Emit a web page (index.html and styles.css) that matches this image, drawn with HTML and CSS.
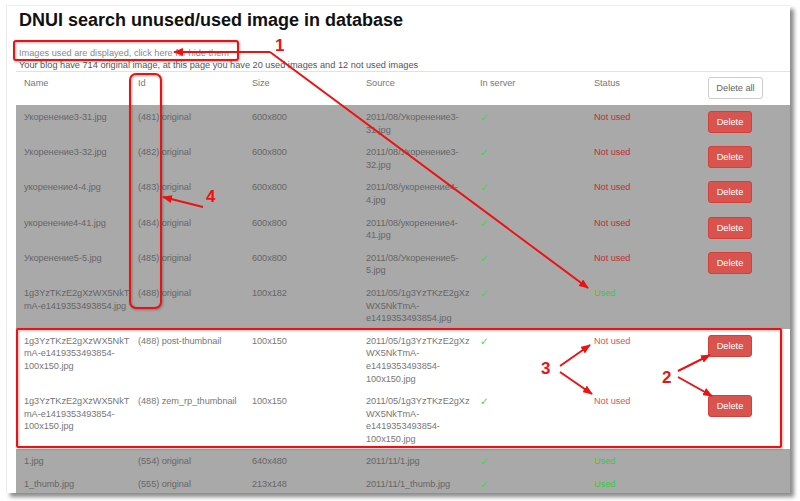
FILE: index.html
```html
<!DOCTYPE html>
<html lang="en">

<head>
    <meta charset="UTF-8">
    <meta name="viewport" content="width=device-width, initial-scale=1.0">
    <title>DNUI search unused/used image in database</title>
    <link rel="stylesheet" href="styles.css">
</head>

<body>
    <div class="frame">
        <h1>DNUI search unused/used image in database</h1>
        <p class="toggle">Images used are displayed, click here for hide them</p>
        <p class="summary">Your blog have 714 original image, at this page you have 20 used images and 12 not used images</p>

        <table class="images">
            <thead>
                <tr>
                    <th>Name</th>
                    <th>Id</th>
                    <th>Size</th>
                    <th>Source</th>
                    <th>In server</th>
                    <th>Status</th>
                    <th><span class="btn btn-default">Delete all</span></th>
                </tr>
            </thead>
            <tbody>
                <tr class="used">
                    <td>Укоренение3-31.jpg</td>
                    <td>(481) original</td>
                    <td>600x800</td>
                    <td>2011/08/Укоренение3-<br>31.jpg</td>
                    <td class="check">✓</td>
                    <td class="not-used">Not used</td>
                    <td><span class="btn btn-danger">Delete</span></td>
                </tr>
                <tr class="used">
                    <td>Укоренение3-32.jpg</td>
                    <td>(482) original</td>
                    <td>600x800</td>
                    <td>2011/08/Укоренение3-<br>32.jpg</td>
                    <td class="check">✓</td>
                    <td class="not-used">Not used</td>
                    <td><span class="btn btn-danger">Delete</span></td>
                </tr>
                <tr class="used">
                    <td>укоренение4-4.jpg</td>
                    <td>(483) original</td>
                    <td>600x800</td>
                    <td>2011/08/укоренение4-<br>4.jpg</td>
                    <td class="check">✓</td>
                    <td class="not-used">Not used</td>
                    <td><span class="btn btn-danger">Delete</span></td>
                </tr>
                <tr class="used">
                    <td>укоренение4-41.jpg</td>
                    <td>(484) original</td>
                    <td>600x800</td>
                    <td>2011/08/укоренение4-<br>41.jpg</td>
                    <td class="check">✓</td>
                    <td class="not-used">Not used</td>
                    <td><span class="btn btn-danger">Delete</span></td>
                </tr>
                <tr class="used">
                    <td>Укоренение5-5.jpg</td>
                    <td>(485) original</td>
                    <td>600x800</td>
                    <td>2011/08/Укоренение5-<br>5.jpg</td>
                    <td class="check">✓</td>
                    <td class="not-used">Not used</td>
                    <td><span class="btn btn-danger">Delete</span></td>
                </tr>
                <tr class="used">
                    <td>1g3YzTKzE2gXzWX5NkT<br>mA-e1419353493854.jpg</td>
                    <td>(488) original</td>
                    <td>100x182</td>
                    <td>2011/05/1g3YzTKzE2gXz<br>WX5NkTmA-<br>e1419353493854.jpg</td>
                    <td class="check">✓</td>
                    <td class="is-used">Used</td>
                    <td></td>
                </tr>
                <tr>
                    <td>1g3YzTKzE2gXzWX5NkT<br>mA-e1419353493854-<br>100x150.jpg</td>
                    <td>(488) post-thumbnail</td>
                    <td>100x150</td>
                    <td>2011/05/1g3YzTKzE2gXz<br>WX5NkTmA-<br>e1419353493854-<br>100x150.jpg</td>
                    <td class="check">✓</td>
                    <td class="not-used">Not used</td>
                    <td><span class="btn btn-danger">Delete</span></td>
                </tr>
                <tr>
                    <td>1g3YzTKzE2gXzWX5NkT<br>mA-e1419353493854-<br>100x150.jpg</td>
                    <td>(488) zem_rp_thumbnail</td>
                    <td>100x150</td>
                    <td>2011/05/1g3YzTKzE2gXz<br>WX5NkTmA-<br>e1419353493854-<br>100x150.jpg</td>
                    <td class="check">✓</td>
                    <td class="not-used">Not used</td>
                    <td><span class="btn btn-danger">Delete</span></td>
                </tr>
                <tr class="used">
                    <td>1.jpg</td>
                    <td>(554) original</td>
                    <td>640x480</td>
                    <td>2011/11/1.jpg</td>
                    <td class="check">✓</td>
                    <td class="is-used">Used</td>
                    <td></td>
                </tr>
                <tr class="used">
                    <td>1_thumb.jpg</td>
                    <td>(555) original</td>
                    <td>213x148</td>
                    <td>2011/11/1_thumb.jpg</td>
                    <td class="check">✓</td>
                    <td class="is-used">Used</td>
                    <td></td>
                </tr>
            </tbody>
        </table>
    </div>

    <!-- red callouts drawn over the screenshot -->
    <svg class="callouts" width="800" height="501" viewBox="0 0 800 501">
        <defs>
            <marker id="head" viewBox="0 0 10 8" refX="9" refY="4" markerWidth="10" markerHeight="8"
                markerUnits="userSpaceOnUse" orient="auto">
                <path d="M0,0 L10,4 L0,8 Z" fill="#ee1111" />
            </marker>
        </defs>
        <g fill="none" stroke="#ee1111" stroke-width="2">
            <rect x="14" y="41" width="224" height="19" rx="2" />
            <rect x="130" y="74" width="31" height="234" rx="6" />
            <rect x="17" y="329" width="764" height="118" rx="1" />
        </g>
        <g stroke="#ee1111" stroke-width="2" marker-end="url(#head)">
            <line x1="270" y1="52" x2="174" y2="52" />
            <line x1="270" y1="52" x2="588" y2="288" />
            <line x1="203" y1="207" x2="163" y2="197" />
            <line x1="560" y1="366" x2="590" y2="345" />
            <line x1="560" y1="372" x2="592" y2="394" />
            <line x1="678" y1="371" x2="710" y2="355" />
            <line x1="678" y1="377" x2="712" y2="396" />
        </g>
        <g class="num">
            <text x="275" y="51">1</text>
            <text x="206" y="202">4</text>
            <text x="541" y="374">3</text>
            <text x="662" y="383">2</text>
        </g>
    </svg>
</body>

</html>
```

FILE: styles.css
```css
* {
    margin: 0;
    padding: 0;
    box-sizing: border-box;
}

body {
    width: 800px;
    height: 501px;
    position: relative;
    overflow: hidden;
    background: #fff;
    font-family: 'Liberation Sans', Arial, sans-serif;
    font-size: 9.2px;
    color: #666;
}

/* the captured admin page, with its drop shadow */
.frame {
    margin: 5px 0 0 6px;
    width: 784px;
    height: 488px;
    overflow: hidden;
    background: #fff;
    border-top: 1px solid #ececec;
    border-left: 1px solid #ececec;
    box-shadow: 4px 4px 4px rgba(0, 0, 0, 0.45);
    padding: 4px 0 0 9px;
}

.frame h1 {
    font-size: 18px;
    line-height: 20px;
    font-weight: 700;
    color: #111;
    margin-left: 3px;
}

.toggle,
.summary {
    line-height: 12px;
    margin-left: 3px;
}

.toggle {
    margin-top: 17px;
    color: #888;
}

.summary {
    color: #555;
}

.images {
    table-layout: fixed;
    border-collapse: collapse;
    width: 798px;
    border-top: 1px solid #e2e2e2;
}

.images th,
.images td {
    width: 114px;
    text-align: left;
    vertical-align: top;
    font-weight: 400;
    white-space: nowrap;
    letter-spacing: -0.05px;
}

.images th {
    padding: 5px 8px 6px;
    line-height: 12px;
    color: #777;
}

.images td {
    padding: 6px 8px 4px;
    line-height: 12.6px;
    color: #777;
}

.images tr.used td {
    background: #a9a9a9;
    color: #666;
}

.images .check {
    font-family: 'DejaVu Sans', sans-serif;
    font-size: 10.5px;
    color: #4fd94f;
}

.images .used .check {
    color: #2fe02f;
}

.not-used {
    color: #dd5555 !important;
}

.used .not-used {
    color: #b83232 !important;
}

.is-used {
    color: #35cc35 !important;
}

.btn {
    display: inline-block;
    height: 22px;
    line-height: 20px;
    padding: 0 2px;
    border-radius: 3px;
    font-size: 9.3px;
    text-align: center;
    white-space: nowrap;
}

.btn-danger {
    width: 44px;
    background: #d9534f;
    border: 1px solid #d43f3a;
    color: #fff;
}

.btn-default {
    width: 55px;
    background: #fff;
    border: 1px solid #ccc;
    color: #666;
}

.callouts {
    position: absolute;
    left: 0;
    top: 0;
    pointer-events: none;
}

.callouts rect {
    filter: drop-shadow(1px 1px 1px rgba(0, 0, 0, 0.3));
}

.num text {
    font-family: 'Liberation Sans', Arial, sans-serif;
    font-weight: 700;
    font-size: 17px;
    fill: #ee1111;
}
```
